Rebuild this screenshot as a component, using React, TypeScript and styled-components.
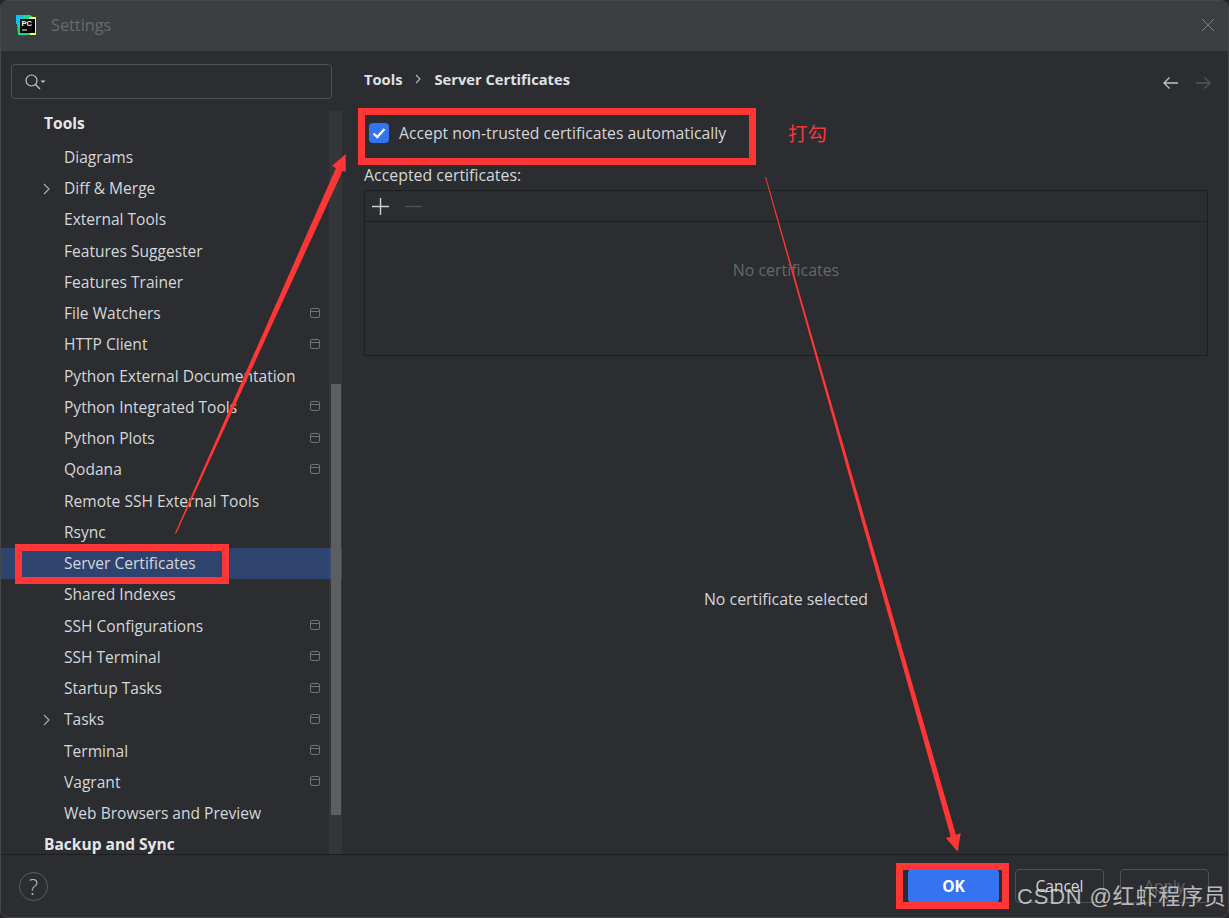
import React from "react";
import styled, { createGlobalStyle } from "styled-components";

const Global = createGlobalStyle`
  html, body { margin: 0; padding: 0; background: #2a2630; }
  #root { width: 1229px; height: 918px; overflow: hidden; }
  * { box-sizing: border-box; }
`;

const FONT = `"Open Sans", "Noto Sans", "Noto Sans CJK SC", sans-serif`;

const Stage = styled.div`
  position: relative;
  width: 1229px;
  height: 918px;
  font-family: ${FONT};
  font-size: 15.9px;
  color: #dfe1e5;
`;

const Win = styled.div`
  width: 1229px;
  height: 918px;
  border: 1px solid #45474a;
  border-radius: 8px;
  overflow: hidden;
  display: flex;
  flex-direction: column;
  background: #2b2d30;
`;

const TitleBar = styled.header`
  height: 50px;
  flex: none;
  background: #3b3f41;
  display: flex;
  align-items: center;
  padding: 0 13px 3px 14px;
  gap: 14px;
`;

const Title = styled.span`
  flex: 1;
  font-size: 16.3px;
  color: #686b6e;
`;

const Main = styled.div`
  flex: 1;
  min-height: 0;
  display: flex;
`;

const Sidebar = styled.aside`
  width: 341px;
  flex: none;
  display: flex;
  flex-direction: column;
  padding-top: 13px;
`;

const SearchBox = styled.div`
  margin: 0 10px 0 10px;
  height: 35px;
  flex: none;
  border: 1px solid #4e5157;
  border-radius: 4px;
  display: flex;
  align-items: center;
  padding-left: 12px;
`;

const ListWrap = styled.div`
  position: relative;
  flex: 1;
  min-height: 0;
  margin-top: 8px;
  overflow: hidden;
  font-size: 15.55px;
`;

const Row = styled.div<{ $selected?: boolean; $head?: boolean }>`
  height: 31.25px;
  display: flex;
  align-items: center;
  padding-left: ${(p) => (p.$head ? 43 : 63)}px;
  position: relative;
  font-weight: ${(p) => (p.$head ? 700 : 400)};
  background: ${(p) => (p.$selected ? "#2e436e" : "transparent")};
  color: ${(p) => (p.$head ? "#e4e6ea" : "#d5d7db")};
  margin-bottom: ${(p) => (p.$head ? 3 : 0)}px;
`;

const Chevron = styled.svg`
  position: absolute;
  left: 41px;
  top: 10px;
`;

const ProjectMark = styled.svg`
  position: absolute;
  left: 308px;
  top: 9px;
`;

const Track = styled.div`
  position: absolute;
  right: 0;
  top: 4px;
  bottom: 0;
  width: 13px;
  background: rgba(255, 255, 255, 0.045);
`;

const Thumb = styled.div`
  position: absolute;
  left: 2px;
  right: 1px;
  top: 273px;
  height: 431px;
  background: #5c5e60;
`;

const Content = styled.section`
  flex: 1;
  min-width: 0;
  display: flex;
  flex-direction: column;
  padding: 0 20px 0 22px;
`;

const CrumbBar = styled.div`
  height: 55px;
  flex: none;
  display: flex;
  align-items: center;
  gap: 12px;
  font-weight: 700;
  font-size: 14.7px;
  color: #dfe1e5;
`;

const NavArrows = styled.div`
  margin-left: auto;
  display: flex;
  gap: 18px;
  margin-top: 8px;
  margin-right: -3px;
`;

const CheckRow = styled.label`
  display: flex;
  align-items: center;
  gap: 10px;
  height: 22px;
  margin-top: 16px;
  margin-left: 5px;
  font-size: 15.75px;
  color: #d5d7db;
`;

const CheckBox = styled.span`
  width: 20px;
  height: 20px;
  border-radius: 4px;
  background: #3574f0;
  display: flex;
  align-items: center;
  justify-content: center;
`;

const FieldLabel = styled.div`
  margin-top: 20px;
  height: 22px;
  line-height: 22px;
  color: #d5d7db;
`;

const TableBox = styled.div`
  margin-top: 4px;
  height: 166px;
  flex: none;
  border: 1px solid #1e1f22;
  display: flex;
  flex-direction: column;
`;

const TableTools = styled.div`
  height: 31px;
  flex: none;
  border-bottom: 1px solid #1e1f22;
  display: flex;
  align-items: center;
  padding-left: 7px;
  gap: 16px;
`;

const TableEmpty = styled.div`
  flex: 1;
  text-align: center;
  padding-top: 37px;
  color: #66686c;
`;

const Details = styled.div`
  flex: 1;
  display: flex;
  align-items: center;
  justify-content: center;
  padding-bottom: 12px;
  color: #d5d7db;
`;

const Footer = styled.footer`
  height: 63px;
  flex: none;
  border-top: 1px solid #1e1f22;
  display: flex;
  align-items: center;
  padding: 0 19px 0 18px;
`;

const Help = styled.div`
  width: 29px;
  height: 29px;
  border: 1px solid #5a5d62;
  border-radius: 50%;
  display: flex;
  align-items: center;
  justify-content: center;
  font-size: 22px;
  font-weight: 300;
  color: #b8babe;
  margin-right: auto;
`;

const Btn = styled.button<{ $primary?: boolean; $muted?: boolean }>`
  width: ${(p) => (p.$primary ? 91 : 89)}px;
  height: 34px;
  margin-left: 16px;
  border-radius: 4px;
  font-family: ${FONT};
  font-size: 15.5px;
  font-weight: ${(p) => (p.$primary ? 700 : 400)};
  background: ${(p) => (p.$primary ? "#3574f0" : "transparent")};
  border: 1px solid ${(p) => (p.$primary ? "#3574f0" : "#4e5157")};
  color: ${(p) => (p.$primary ? "#ffffff" : p.$muted ? "#5f6165" : "#d5d7db")};
`;

const Mark = styled.div<{ $x: number; $y: number; $w: number; $h: number }>`
  position: absolute;
  left: ${(p) => p.$x}px;
  top: ${(p) => p.$y}px;
  width: ${(p) => p.$w}px;
  height: ${(p) => p.$h}px;
  border: 7px solid #ff3636;
`;

const Note = styled.span`
  position: absolute;
  left: 788px;
  top: 120px;
  font-size: 19.5px;
  line-height: 26px;
  color: #f03a3a;
  font-family: "Noto Sans CJK SC", sans-serif;
`;

const Overlay = styled.svg`
  position: absolute;
  left: 0;
  top: 0;
  pointer-events: none;
`;

const Watermark = styled.span`
  position: absolute;
  left: 1017px;
  top: 881px;
  font-size: 22px;
  line-height: 32px;
  letter-spacing: 0.8px;
  color: rgba(225, 225, 225, 0.78);
  font-family: "Liberation Sans", "Noto Sans CJK SC", sans-serif;
  white-space: nowrap;
`;

type Item = { t: string; chevron?: boolean; project?: boolean; selected?: boolean; head?: boolean };

const items: Item[] = [
  { t: "Tools", head: true },
  { t: "Diagrams" },
  { t: "Diff & Merge", chevron: true },
  { t: "External Tools" },
  { t: "Features Suggester" },
  { t: "Features Trainer" },
  { t: "File Watchers", project: true },
  { t: "HTTP Client", project: true },
  { t: "Python External Documentation" },
  { t: "Python Integrated Tools", project: true },
  { t: "Python Plots", project: true },
  { t: "Qodana", project: true },
  { t: "Remote SSH External Tools" },
  { t: "Rsync" },
  { t: "Server Certificates", selected: true },
  { t: "Shared Indexes" },
  { t: "SSH Configurations", project: true },
  { t: "SSH Terminal", project: true },
  { t: "Startup Tasks", project: true },
  { t: "Tasks", chevron: true, project: true },
  { t: "Terminal", project: true },
  { t: "Vagrant", project: true },
  { t: "Web Browsers and Preview" },
  { t: "Backup and Sync", head: true },
];

const PcLogo = () => (
  <svg width="22" height="22" viewBox="0 0 22 22">
    <path d="M5 1h10l3 2v4H5z" fill="#21d789" />
    <path d="M1 1h8v4H5v5H1z" fill="#07c3f2" />
    <path d="M2 9h5v12H3z" fill="#21d789" />
    <path d="M14 3h7v18H8v-3h6z" fill="#fcf84a" />
    <path d="M7 17h8v4H7z" fill="#21d789" />
    <rect x="5" y="5" width="15" height="14" fill="#000" />
    <text x="6.5" y="12" fontSize="7.5" fontWeight="700" fill="#fff" fontFamily="Liberation Sans, sans-serif">PC</text>
    <rect x="7" y="15.5" width="5" height="1" fill="#fff" />
  </svg>
);

const ProjectIcon = () => (
  <ProjectMark width="12" height="12" viewBox="0 0 12 12" fill="none" stroke="#6f7276" strokeWidth="1">
    <rect x="1.5" y="1.5" width="9" height="9" rx="1.5" />
    <path d="M1.5 4.5h9" />
  </ProjectMark>
);

export default function App() {
  return (
    <Stage>
      <Global />
      <Win>
        <TitleBar>
          <PcLogo />
          <Title>Settings</Title>
          <svg width="14" height="14" viewBox="0 0 14 14" stroke="#7f8285" strokeWidth="1">
            <path d="M1 1l12 12M13 1L1 13" />
          </svg>
        </TitleBar>
        <Main>
          <Sidebar>
            <SearchBox>
              <svg width="24" height="18" viewBox="0 0 24 18" fill="none" stroke="#c4c6ca" strokeWidth="1.2">
                <circle cx="7.5" cy="7.5" r="5.5" />
                <path d="M11.5 11.5l4.5 4.5" />
                <path d="M16.5 7.5h5l-2.5 2.5z" fill="#c4c6ca" stroke="none" />
              </svg>
            </SearchBox>
            <ListWrap>
              {items.map((it) => (
                <Row key={it.t} $selected={it.selected} $head={it.head}>
                  {it.chevron && (
                    <Chevron width="10" height="12" viewBox="0 0 10 12" fill="none" stroke="#a8aaae" strokeWidth="1.2">
                      <path d="M2 1l5 5-5 5" />
                    </Chevron>
                  )}
                  {it.t}
                  {it.project && <ProjectIcon />}
                </Row>
              ))}
              <Track>
                <Thumb />
              </Track>
            </ListWrap>
          </Sidebar>
          <Content>
            <CrumbBar>
              <span>Tools</span>
              <svg width="8" height="10" viewBox="0 0 8 10" fill="none" stroke="#b4b6ba" strokeWidth="1.1">
                <path d="M2 1l4 4-4 4" />
              </svg>
              <span>Server Certificates</span>
              <NavArrows>
                <svg width="15" height="14" viewBox="0 0 15 14" fill="none" stroke="#c0c2c6" strokeWidth="1.3">
                  <path d="M15 7H1M6.5 1.5L1 7l5.5 5.5" />
                </svg>
                <svg width="15" height="14" viewBox="0 0 15 14" fill="none" stroke="#55575b" strokeWidth="1.3">
                  <path d="M0 7h14M8.5 1.5L14 7l-5.5 5.5" />
                </svg>
              </NavArrows>
            </CrumbBar>
            <CheckRow>
              <CheckBox>
                <svg width="14" height="12" viewBox="0 0 14 12" fill="none" stroke="#fff" strokeWidth="2.2">
                  <path d="M1.5 6.5l3.8 3.6L12.5 2" />
                </svg>
              </CheckBox>
              Accept non-trusted certificates automatically
            </CheckRow>
            <FieldLabel>Accepted certificates:</FieldLabel>
            <TableBox>
              <TableTools>
                <svg width="17" height="17" viewBox="0 0 17 17" stroke="#ced0d4" strokeWidth="1.4">
                  <path d="M8.5 0v17M0 8.5h17" />
                </svg>
                <svg width="17" height="17" viewBox="0 0 17 17" stroke="#4e5055" strokeWidth="1.4">
                  <path d="M0 8.5h17" />
                </svg>
              </TableTools>
              <TableEmpty>No certificates</TableEmpty>
            </TableBox>
            <Details>No certificate selected</Details>
          </Content>
        </Main>
        <Footer>
          <Help>?</Help>
          <Btn $primary>OK</Btn>
          <Btn>Cancel</Btn>
          <Btn $muted>Apply</Btn>
        </Footer>
      </Win>

      <Overlay width="1229" height="918" viewBox="0 0 1229 918">
        <polygon points="175,533 336,168 332,166 345.7,154 345.7,172 342.7,170.7 176,534" fill="#ff3636" />
        <polygon points="765,177 950.7,836.7 946,838 957.7,851.7 960.7,833 956,835 766,177" fill="#ff3636" />
      </Overlay>
      <Mark $x={358} $y={108} $w={398} $h={57} />
      <Mark $x={15} $y={544} $w={214} $h={40} />
      <Mark $x={896} $y={863} $w={113} $h={46} />
      <Note>打勾</Note>
      <Watermark>CSDN @红虾程序员</Watermark>
    </Stage>
  );
}
